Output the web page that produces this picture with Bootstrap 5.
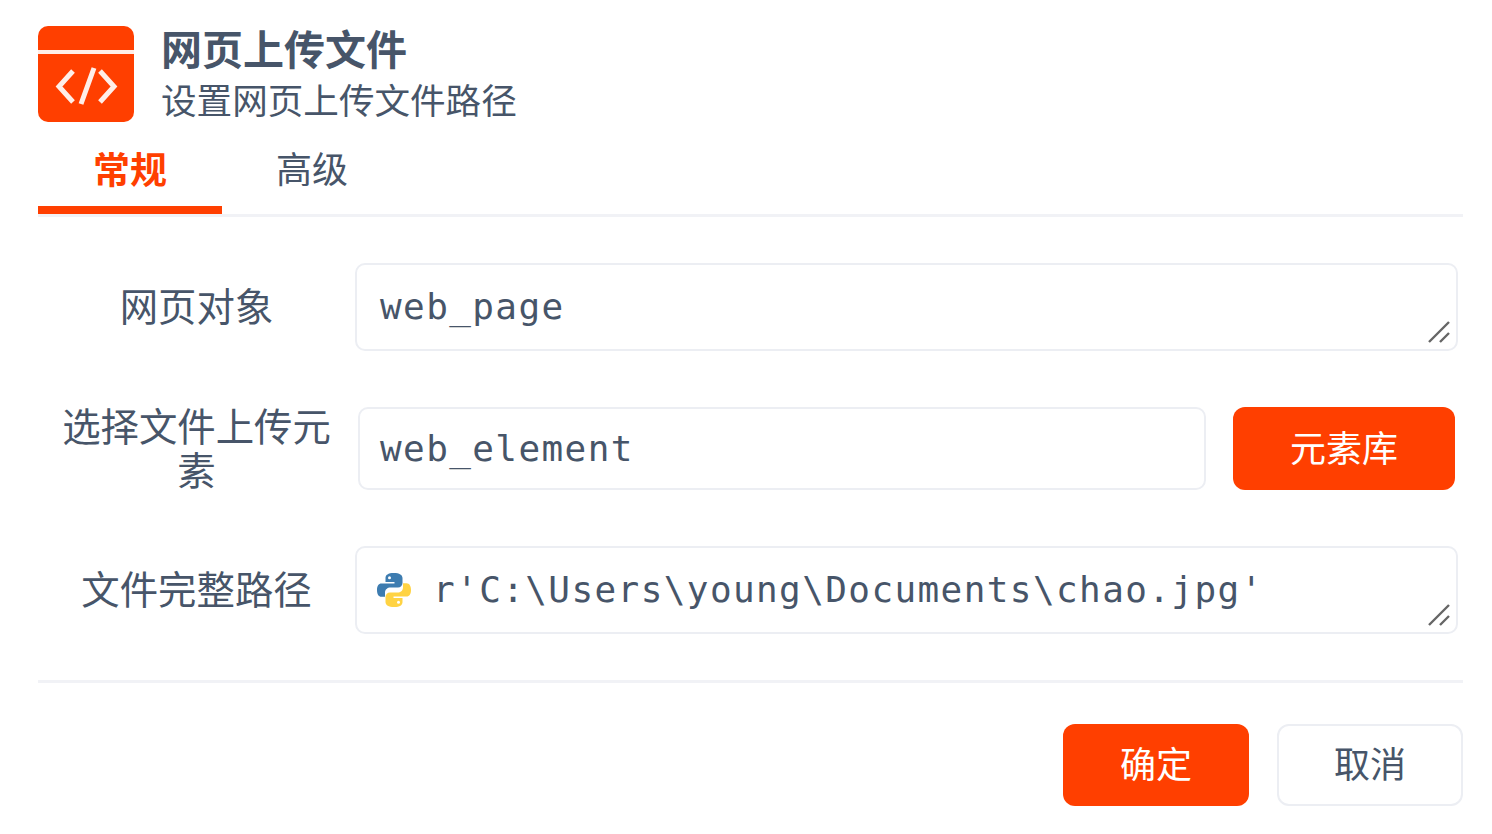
<!DOCTYPE html>
<html lang="zh-CN">
<head>
  <meta charset="UTF-8" />
  <meta name="viewport" content="width=device-width, initial-scale=1.0" />
  <title>网页上传文件</title>
  <link href="https://cdn.jsdelivr.net/npm/bootstrap@5.3.3/dist/css/bootstrap.min.css" rel="stylesheet" />
  <style>
    body {
      font-family: "Inter", "Noto Sans CJK SC", sans-serif;
      background-color: #fff;
      color: #475569;
      overflow: hidden;
    }
    .dlg { width: 1492px; height: 834px; padding: 26px 29px 0 38px; }
    .dlg-head { gap: 27px; }
    .dlg-icon { width: 96px; height: 96px; flex: none; }
    .dlg-title { font-size: 41px; line-height: 48px; font-weight: 700; margin: 0; color: #475569; }
    .dlg-sub { font-size: 35.6px; line-height: 52px; margin: 0; padding-top: 2px; }
    .tab-bar { margin-top: 1px; border-bottom: 3px solid #f1f2f6; }
    .tab-item {
      width: 180px; height: 85px; font-size: 36px; line-height: 82px;
      text-align: center; color: #475569;
    }
    .tab-item.on {
      width: 184px; color: #ff3f00; font-weight: 700; font-size: 37px;
      border-bottom: 8px solid #ff3f00; line-height: 84px;
    }
    .field-label { width: 317px; flex: none; font-size: 38.4px; line-height: 44px; text-align: center; padding: 0 24px; }
    .code-box {
      position: relative; border: 2px solid #eceef3; border-radius: 10px; background: #fff;
      font-family: "DejaVu Sans Mono", "Liberation Mono", monospace;
      font-size: 36px; letter-spacing: 1.4px; color: #475569;
      padding: 0 0 0 23px; display: flex; align-items: center; white-space: nowrap;
    }
    .grip { position: absolute; right: 5px; bottom: 5px; width: 24px; height: 24px; }
    .py-logo { width: 36px; height: 36px; flex: none; margin-right: 21px; margin-left: -4px; }
    .first-row { margin-top: 46px; height: 88px; }
    .second-row { margin-top: 56px; height: 83px; }
    .third-row { margin-top: 56px; height: 88px; }
    .lib-btn {
      width: 222px; height: 83px; background: #ff3f00; border: 0; border-radius: 12px;
      color: #fff; font-size: 36px; margin-left: 27px; flex: none;
    }
    .sep { border-top: 3px solid #f1f2f6; margin: 46px 0 0 0; opacity: 1; }
    .foot { margin-top: 41px; gap: 28px; }
    .foot .btn { width: 186px; height: 82px; font-size: 36px; border-radius: 12px; padding: 0; }
    .btn-ok { background: #ff3f00; border: 0; color: #fff; }
    .btn-no { background: #fff; border: 2px solid #eceef3; color: #475569; }
  </style>
</head>
<body>
  <div class="dlg">
    <!-- header -->
    <div class="d-flex align-items-start dlg-head">
      <svg class="dlg-icon" viewBox="0 0 96 96">
        <rect width="96" height="96" rx="10" fill="#ff3f00" />
        <rect y="24" width="96" height="4" fill="#ffeee8" />
        <path d="M35 45 L21 60.500 L35 76 M62 45 L76 60.500 L62 76 M56 42 L43 78" fill="none" stroke="#ffeee8" stroke-width="5" />
      </svg>
      <div>
        <h1 class="dlg-title">网页上传文件</h1>
        <p class="dlg-sub">设置网页上传文件路径</p>
      </div>
    </div>

    <!-- tabs -->
    <div class="d-flex tab-bar">
      <div class="tab-item on">常规</div>
      <div class="tab-item">高级</div>
    </div>

    <!-- form -->
    <div class="d-flex align-items-center first-row">
      <div class="field-label">网页对象</div>
      <div class="code-box flex-grow-1 h-100" style="margin-right:5px">web_page
        <svg class="grip" viewBox="0 0 24 24"><path d="M2 22 L22 2 M13 22 L22 13" stroke="#666" stroke-width="2.4" fill="none"/></svg>
      </div>
    </div>
    <div class="d-flex align-items-center second-row">
      <div class="field-label">选择文件上传元素</div>
      <div class="code-box flex-grow-1 h-100" style="margin-left:3px;padding-left:20px">web_element</div>
      <button class="lib-btn" type="button" style="margin-right:8px">元素库</button>
    </div>
    <div class="d-flex align-items-center third-row">
      <div class="field-label">文件完整路径</div>
      <div class="code-box flex-grow-1 h-100" style="margin-right:5px">
        <svg class="py-logo" viewBox="0 0 36 36">
          <path d="M17.800 1C12 1 9.500 3 9.500 6v4h9v1.500H5.500C2.500 11.500 1 14 1 18s1.500 6.800 4.500 6.800H9v-4.300c0-3 2.500-5 5.500-5h7.500c2.500 0 4.500-2 4.500-4.500V6c0-3-3-5-8.700-5z" fill="#3d7cb0"/>
          <path d="M18.200 35c5.800 0 8.300-2 8.300-5v-4h-9v-1.500h13c3 0 4.500-2.500 4.500-6.500s-1.500-6.800-4.500-6.800H27v4.300c0 3-2.500 5-5.500 5H14c-2.500 0-4.500 2-4.500 4.500V30c0 3 3 5 8.700 5z" fill="#ffd343"/>
          <circle cx="13.500" cy="5.700" r="1.500" fill="#fff"/>
          <circle cx="22.500" cy="30.300" r="1.500" fill="#fff"/>
        </svg>r'C:\Users\young\Documents\chao.jpg'
        <svg class="grip" viewBox="0 0 24 24"><path d="M2 22 L22 2 M13 22 L22 13" stroke="#666" stroke-width="2.4" fill="none"/></svg>
      </div>
    </div>

    <hr class="sep" />

    <!-- footer -->
    <div class="d-flex justify-content-end foot">
      <button class="btn btn-ok" type="button">确定</button>
      <button class="btn btn-no" type="button">取消</button>
    </div>
  </div>
  <script src="https://cdn.jsdelivr.net/npm/bootstrap@5.3.3/dist/js/bootstrap.bundle.min.js"></script>
</body>
</html>
